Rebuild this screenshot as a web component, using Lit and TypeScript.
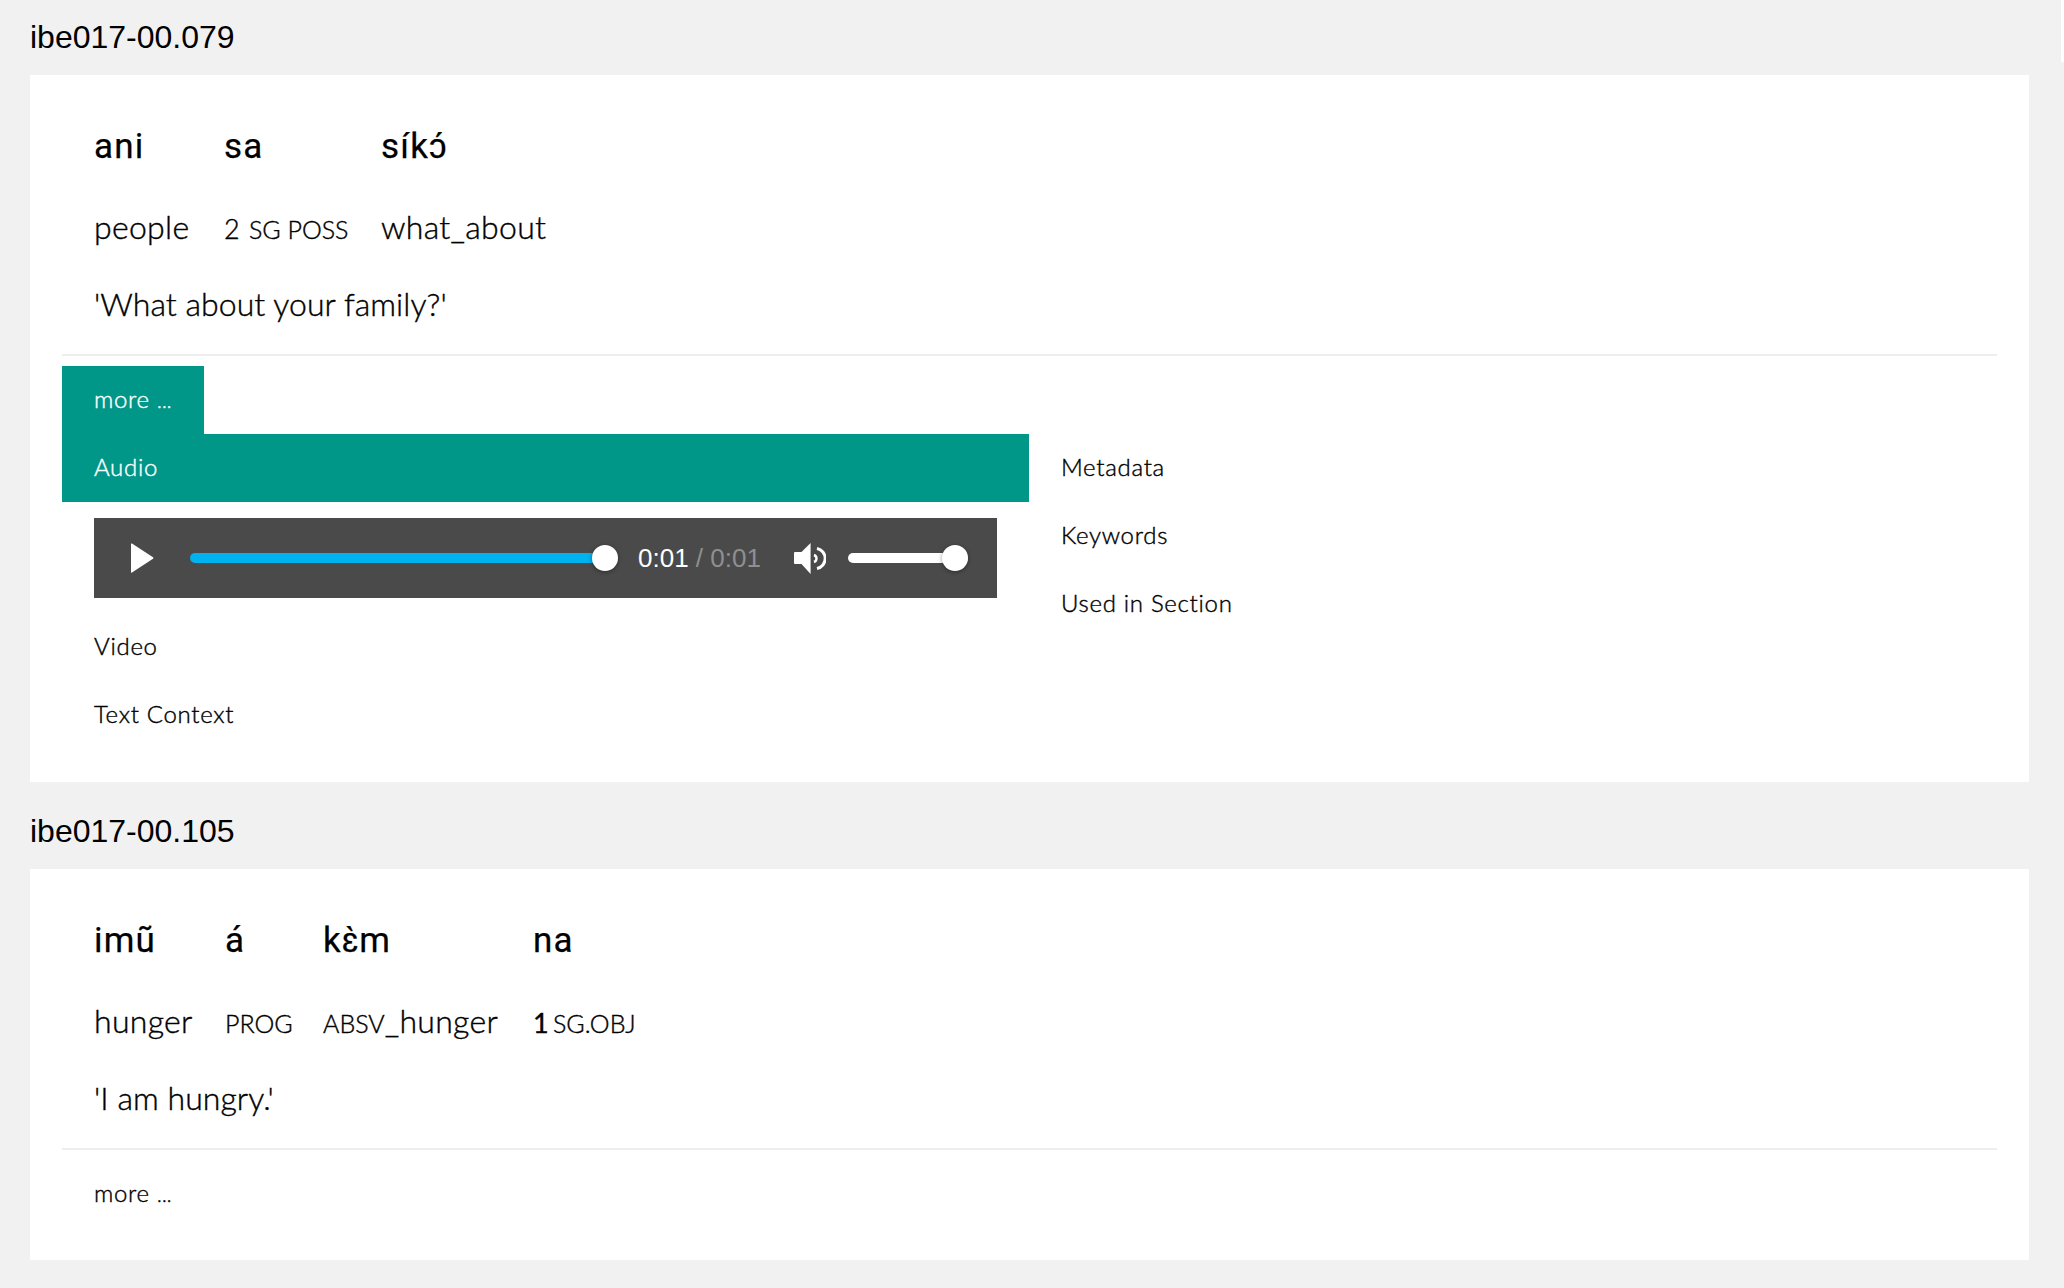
import { LitElement, html, css } from "lit";
import { customElement } from "lit/decorators.js";

@customElement("app-root")
export class AppRoot extends LitElement {
  static styles = css`
    :host { display: block; min-height: 1288px; background: #f1f1f1; color: #000; position: relative; font-family: "Lato", "Noto Sans", sans-serif; }
    .strip { position: absolute; top: 0; right: 0; width: 3px; height: 62px; background: #fff; }
    .page { padding: 0 35px 0 30px; }
    .id { font: 32px/37px "Liberation Sans", Arial, sans-serif; height: 37px; padding: 19px 0 19px; }
    .id.second { padding: 31px 0 19px; }
    .card { background: #fff; padding: 46px 32px 33px; }
    .card.last { padding-bottom: 32px; }
    .interlinear { display: grid; padding: 0 32px; row-gap: 31px; }
    .cols-a { grid-template-columns: 130px 157px 1fr; }
    .cols-b { grid-template-columns: 131px 98px 210px 1fr; }
    .vern { font: 400 35px/52px "Roboto", sans-serif; letter-spacing: 1.2px; -webkit-text-stroke: 0.25px #000; }
    .gloss { font-size: 32px; font-weight: 300; line-height: 46px; height: 52px; letter-spacing: 0.3px; -webkit-text-stroke: 0.4px #000; }
    .sc { font-size: 25px; letter-spacing: 0; }
    .sc.tight { margin-left: -5px; }
    .num { font-size: 27px; }
    .num.strong { font-weight: 400; }
    .free { font-size: 32px; font-weight: 300; line-height: 36px; padding: 0 32px; margin-top: 30px; letter-spacing: 0.05px; -webkit-text-stroke: 0.4px #000; }
    hr { border: 0; border-top: 2px solid #eee; margin: 32px 0 10px; }
    .tabs { display: flex; }
    .item { font-size: 24px; font-weight: 300; line-height: 36px; padding: 15px 32px 17px; letter-spacing: 0.7px; -webkit-text-stroke: 0.4px currentColor; }
    .dots { font-size: 20px; line-height: 0; letter-spacing: 0.2px; }
    .active { background: #009688; color: #fff; }
    .split { display: grid; grid-template-columns: 967px 1fr; }
    .player { margin: 16px 32px 15px; height: 80px; background: #4a4a4a; display: flex; align-items: center; padding: 0 29px 0 36px; box-sizing: border-box; color: #fff; }
    .play { width: 24px; height: 30px; margin-right: 36px; flex: none; }
    .track { height: 10px; border-radius: 5px; position: relative; flex: none; }
    .track.progress { width: 428px; background: #00b3f0; margin-right: 20px; }
    .track.vol { width: 120px; background: #fff; }
    .thumb { position: absolute; top: -8px; right: 0; width: 26px; height: 26px; border-radius: 50%; background: #fff; box-shadow: 0 1px 4px rgba(0,0,0,.4); }
    .time { font: 26px/30px "Liberation Sans", Arial, sans-serif; white-space: nowrap; width: 156px; flex: none; }
    .time span { color: #8f8f8f; }
    .speaker { width: 32px; height: 31px; margin-right: 22px; flex: none; }
  `;

  render() {
    return html`
      <div class="strip"></div>
      <div class="page">
        <div class="id">ibe017-00.079</div>
        <div class="card">
          <div class="interlinear cols-a">
            <div class="vern">ani</div><div class="vern">sa</div><div class="vern">síkɔ́</div>
            <div class="gloss">people</div><div class="gloss"><span class="num">2</span> <span class="sc">SG POSS</span></div><div class="gloss">what_about</div>
          </div>
          <div class="free">'What about your family?'</div>
          <hr />
          <div class="tabs"><div class="item active">more <span class="dots">...</span></div></div>
          <div class="split">
            <div>
              <div class="item active">Audio</div>
              <div class="player">
                <svg class="play" viewBox="0 0 24 30"><path d="M1 1 Q1 0 2 .6 L23 14.2 Q24 15 23 15.8 L2 29.4 Q1 30 1 29 Z" fill="#fff"/></svg>
                <div class="track progress"><div class="thumb"></div></div>
                <div class="time">0:01 <span>/ 0:01</span></div>
                <svg class="speaker" viewBox="0 0 32 31" fill="none">
                  <path d="M1 9 H7.5 L16.6 0 V31 L7.5 21 H1 Q0 21 0 20 V10 Q0 9 1 9 Z" fill="#fff"/>
                  <path d="M20 12 A3.7 3.7 0 0 1 20 19" stroke="#fff" stroke-width="2.4"/>
                  <path d="M23 5.5 A10.2 10.2 0 0 1 23 25.5" stroke="#fff" stroke-width="3"/>
                </svg>
                <div class="track vol"><div class="thumb"></div></div>
              </div>
              <div class="item">Video</div>
              <div class="item">Text Context</div>
            </div>
            <div>
              <div class="item">Metadata</div>
              <div class="item">Keywords</div>
              <div class="item">Used in Section</div>
            </div>
          </div>
        </div>
        <div class="id second">ibe017-00.105</div>
        <div class="card last">
          <div class="interlinear cols-b">
            <div class="vern">imũ</div><div class="vern">á</div><div class="vern">kɛ̀m</div><div class="vern">na</div>
            <div class="gloss">hunger</div><div class="gloss"><span class="sc">PROG</span></div><div class="gloss"><span class="sc">ABSV</span>_hunger</div><div class="gloss"><span class="num strong">1</span> <span class="sc tight">SG.OBJ</span></div>
          </div>
          <div class="free">'I am hungry.'</div>
          <hr />
          <div class="item">more <span class="dots">...</span></div>
        </div>
      </div>
    `;
  }
}
